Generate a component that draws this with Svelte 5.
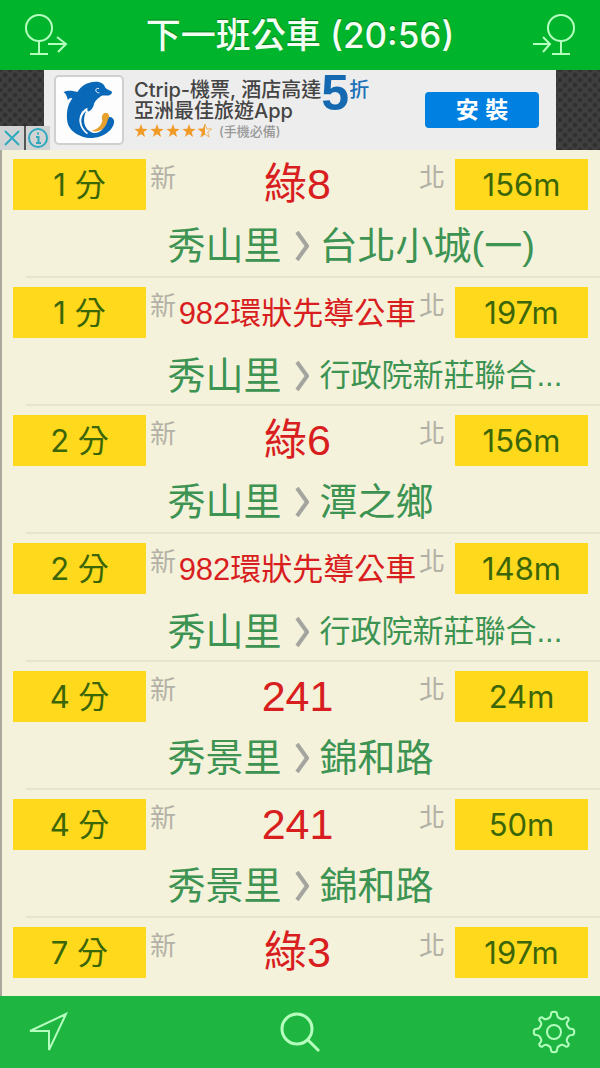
<script>
  const time = '20:56';

  const buses = [
    { minutes: 1, route: '綠8', from: '秀山里', to: '台北小城(一)', distance: 156 },
    { minutes: 1, route: '982環狀先導公車', from: '秀山里', to: '行政院新莊聯合...', distance: 197 },
    { minutes: 2, route: '綠6', from: '秀山里', to: '潭之鄉', distance: 156 },
    { minutes: 2, route: '982環狀先導公車', from: '秀山里', to: '行政院新莊聯合...', distance: 148 },
    { minutes: 4, route: '241', from: '秀景里', to: '錦和路', distance: 24 },
    { minutes: 4, route: '241', from: '秀景里', to: '錦和路', distance: 50 },
    { minutes: 7, route: '綠3', distance: 197 }
  ];

  const star = 'M7 0 8.7 4.8 13.7 5 9.7 8.1 11.1 13 7 10.1 2.9 13 4.3 8.1 .3 5 5.3 4.8Z';
</script>

<div class="app">
  <header class="bar header">
    <button class="icon-btn" aria-label="離站">
      <svg width="44" height="44" viewBox="0 0 44 44">
        <circle cx="15" cy="15" r="13" />
        <path d="M15 28v13M6 41h18M24 31h18M33 24l9 7-8 8" />
      </svg>
    </button>
    <h1>下一班公車 ({time})</h1>
    <button class="icon-btn" aria-label="到站">
      <svg width="44" height="44" viewBox="0 0 44 44">
        <circle cx="29" cy="15" r="13" />
        <path d="M29 28v13M20 41h18M1 31h17M11 24l7 7-7 8" />
      </svg>
    </button>
  </header>

  <aside class="ad">
    <div class="ad-tools">
      <button aria-label="關閉廣告">
        <svg width="18" height="18" viewBox="0 0 18 18"><path d="M2 2l14 14M16 2L2 16" /></svg>
      </button>
      <button aria-label="廣告資訊">
        <svg width="20" height="20" viewBox="0 0 20 20">
          <circle cx="10" cy="10" r="9" />
          <path d="M8 9h2.500v6M8 15h5M10 4.500v2" />
        </svg>
      </button>
    </div>
    <div class="ad-body">
      <div class="ad-logo">
        <svg viewBox="162 48 210 210">
          <path
            fill="#0a68b8"
            d="M186 96C199 89 217 91 230 96C241 77 261 64 286 63C305 62 315 70 319 82C324 88 335 90 340 95C341 100 338 104 330 107L309 107C298 113 286 123 282 137C280 147 272 156 264 158C261 155 263 149 261 146C239 157 234 184 246 208C257 230 271 236 287 237C253 245 219 232 205 208C194 190 196 164 199 148C202 134 209 124 214 115C207 114 202 117 200 122C196 108 194 102 186 96Z"
          />
          <path
            fill="#0a68b8"
            d="M198 160C200 205 225 238 268 242C312 244 348 215 347 188C345 176 332 170 324 180C318 215 300 230 278 225C252 216 244 186 258 156C240 168 238 196 250 216C230 205 226 180 236 156Z"
          />
          <path
            fill="none"
            stroke="#fdfdfd"
            stroke-width="5"
            d="M250 156C231 178 237 210 262 228"
          />
          <path
            fill="#e8a02c"
            d="M309 171C312 160 327 158 330 169C334 176 327 181 325 190C319 213 299 225 275 220C295 214 306 203 309 189C310 183 306 179 309 171Z"
          />
          <path fill="none" stroke="#fff" stroke-width="3" d="M299 85c-8-3-11 2-10 7 2 6 8 7 11 6" />
        </svg>
      </div>
      <div class="ad-text">
        <p>Ctrip-機票, 酒店高達<b class="five">5</b><span class="off">折</span></p>
        <p>亞洲最佳旅遊App</p>
        <div class="rating">
          {#each [1, 2, 3, 4] as n (n)}
            <svg width="14" height="14" viewBox="0 0 14 14"><path d={star} /></svg>
          {/each}
          <svg width="14" height="14" viewBox="0 0 14 14">
            <path class="outline" d={star} />
            <path d="M7 0V10.100L2.900 13 4.300 8.100 .3 5 5.300 4.800Z" />
          </svg>
          <span>(手機必備)</span>
        </div>
      </div>
      <button class="install">安 裝</button>
    </div>
  </aside>

  <ul class="list">
    {#each buses as bus, i (i)}
      <li>
        <div class="top">
          <span class="badge">{bus.minutes} 分</span>
          <span class="city">新</span>
          <strong class="route" class:long={bus.route.length > 4}>{bus.route}</strong>
          <span class="city north">北</span>
          <span class="badge">{bus.distance}m</span>
        </div>
        {#if bus.to}
          <div class="stops">
            <span class="from">{bus.from}</span>
            <svg width="16" height="32" viewBox="0 0 16 32"><path d="M4 2L14 16 4 30" /></svg>
            <span class="to" class:small={bus.to.length > 7}>{bus.to}</span>
          </div>
        {/if}
      </li>
    {/each}
  </ul>

  <footer class="bar footer">
    <button class="icon-btn" aria-label="定位">
      <svg width="44" height="44" viewBox="0 0 44 44"><path d="M42 4L6 21h19v19Z" /></svg>
    </button>
    <button class="icon-btn search" aria-label="搜尋">
      <svg width="44" height="44" viewBox="0 0 44 44">
        <circle cx="19" cy="19" r="15" />
        <path d="M30 30l11 11" />
      </svg>
    </button>
    <button class="icon-btn" aria-label="設定">
      <svg width="44" height="44" viewBox="0 0 44 44">
        <circle cx="22" cy="22" r="7" />
        <path
          d="M17 8Q19 7 19 4C19 1 25 1 25 4Q25 7 27 8L29 9Q31 10 33 8C35 6 38 9 36 11Q34 13 35 15L36 17Q37 19 40 19C43 19 43 25 40 25Q37 25 36 27L35 29Q34 31 36 33C38 35 35 38 33 36Q31 34 29 35L27 36Q25 37 25 40C25 43 19 43 19 40Q19 37 17 36L15 35Q13 34 11 36C9 38 6 35 8 33Q10 31 9 29L8 27Q7 25 4 25C1 25 1 19 4 19Q7 19 8 17L9 15Q10 13 8 11C6 9 9 6 11 8Q13 10 15 9Z"
        />
      </svg>
    </button>
  </footer>
</div>

<style>
  :global(body) {
    margin: 0;
    background: #f5f2dc;
  }

  .app {
    display: flex;
    flex-direction: column;
    height: 100vh;
    font-family: 'Liberation Sans', 'Noto Sans CJK TC', sans-serif;
  }

  button {
    padding: 0;
    border: none;
    background: none;
    font: inherit;
    cursor: pointer;
  }

  svg {
    display: block;
  }

  .bar {
    display: flex;
    flex: none;
    align-items: center;
    justify-content: space-between;
    padding: 0 24px;
  }

  .header {
    height: 70px;
    background: #00b52c;
  }

  .footer {
    height: 72px;
    background: #1fb541;
  }

  h1 {
    margin: 0;
    color: #f2fff2;
    font-family: Inter, 'Noto Sans CJK TC', sans-serif;
    font-size: 35px;
    font-weight: 500;
    line-height: 48px;
    white-space: nowrap;
    text-shadow: 0 -1px 1px rgba(0, 70, 10, 0.5);
  }

  .icon-btn svg {
    fill: none;
    stroke: #b4ffbe;
    stroke-width: 2;
  }

  .search svg {
    stroke-width: 3;
  }

  /* 廣告 */
  .ad {
    position: relative;
    display: flex;
    flex: none;
    justify-content: center;
    height: 80px;
    background-color: #404040;
    background-image: radial-gradient(#303030 20%, transparent 45%),
      radial-gradient(#303030 20%, transparent 45%);
    background-position: 0 0, 5px 5px;
    background-size: 10px 10px;
  }

  .ad-tools {
    position: absolute;
    bottom: 0;
    left: 0;
    display: flex;
    gap: 2px;
    background: #555;
  }

  .ad-tools button {
    display: flex;
    align-items: center;
    justify-content: center;
    width: 24px;
    height: 24px;
    background: #d2d4d4;
  }

  .ad-tools svg {
    fill: none;
    stroke: #2fa9bd;
    stroke-width: 2;
  }

  .ad-body {
    display: flex;
    align-items: center;
    box-sizing: border-box;
    width: 100%;
    max-width: 512px;
    padding: 0 17px 0 10px;
    background: #ededed;
  }

  .ad-logo {
    box-sizing: border-box;
    width: 70px;
    height: 70px;
    border: 2px solid #d0d0d0;
    border-radius: 5px;
    background: #fdfdfd;
  }

  .ad-text {
    flex: 1;
    padding-left: 10px;
    color: #444;
    font-family: Inter, 'Noto Sans CJK TC', sans-serif;
    font-size: 20px;
    font-weight: 500;
    white-space: nowrap;
  }

  .ad-text p {
    display: flex;
    align-items: center;
    height: 21px;
    margin: 0;
  }

  .five {
    height: 48px;
    color: #1469b0;
    font-family: 'Liberation Sans', sans-serif;
    font-size: 50px;
    line-height: 56px;
  }

  .off {
    color: #1b72b8;
  }

  .rating {
    display: flex;
    align-items: center;
    gap: 2px;
    height: 22px;
    fill: #f09a28;
  }

  .rating .outline {
    fill: none;
    stroke: #f0b565;
  }

  .rating span {
    padding-left: 5px;
    color: #999;
    font-size: 13px;
    line-height: 20px;
  }

  .install {
    width: 114px;
    height: 36px;
    border-radius: 4px;
    background: #0080e0;
    color: #fff;
    font-size: 23px;
    font-weight: 700;
    line-height: 36px;
  }

  /* 班次列表 */
  .list {
    flex: 1;
    min-height: 0;
    margin: 0;
    padding: 0;
    overflow: hidden;
    border-left: 2px solid #aaa89c;
    background: #f5f2dc;
    list-style: none;
  }

  li {
    padding: 9px 12px 0 11px;
  }

  li:not(:last-child) {
    background: linear-gradient(#e6e3d1, #e6e3d1) 24px 100% / 100% 2px no-repeat;
  }

  .top {
    display: flex;
    height: 51px;
  }

  .badge {
    flex: none;
    width: 133px;
    background: #ffd91c;
    color: #3b6608;
    font-family: Inter, 'Noto Sans CJK TC', sans-serif;
    font-size: 31px;
    line-height: 52px;
    text-align: center;
  }

  .city {
    flex: none;
    box-sizing: border-box;
    width: 30px;
    padding-left: 4px;
    color: #b3b1a6;
    font-size: 26px;
    line-height: 38px;
  }

  .city.north {
    width: 36px;
    padding-left: 0;
  }

  .route {
    display: flex;
    flex: 1;
    justify-content: center;
    min-width: 0;
    color: #d81e1e;
    font-size: 43px;
    font-weight: 400;
    line-height: 51px;
    white-space: nowrap;
  }

  .route.long {
    font-size: 31px;
    line-height: 53px;
  }

  .stops {
    display: grid;
    grid-template-columns: 1fr 38px 1fr;
    align-items: center;
    height: 68px;
    color: #3c9352;
    font-size: 38px;
    line-height: 72px;
    white-space: nowrap;
  }

  .stops svg {
    justify-self: center;
    fill: none;
    stroke: #a5a5a0;
    stroke-width: 4;
  }

  .from {
    text-align: right;
  }

  .to.small {
    font-size: 31px;
    line-height: 76px;
  }
</style>
